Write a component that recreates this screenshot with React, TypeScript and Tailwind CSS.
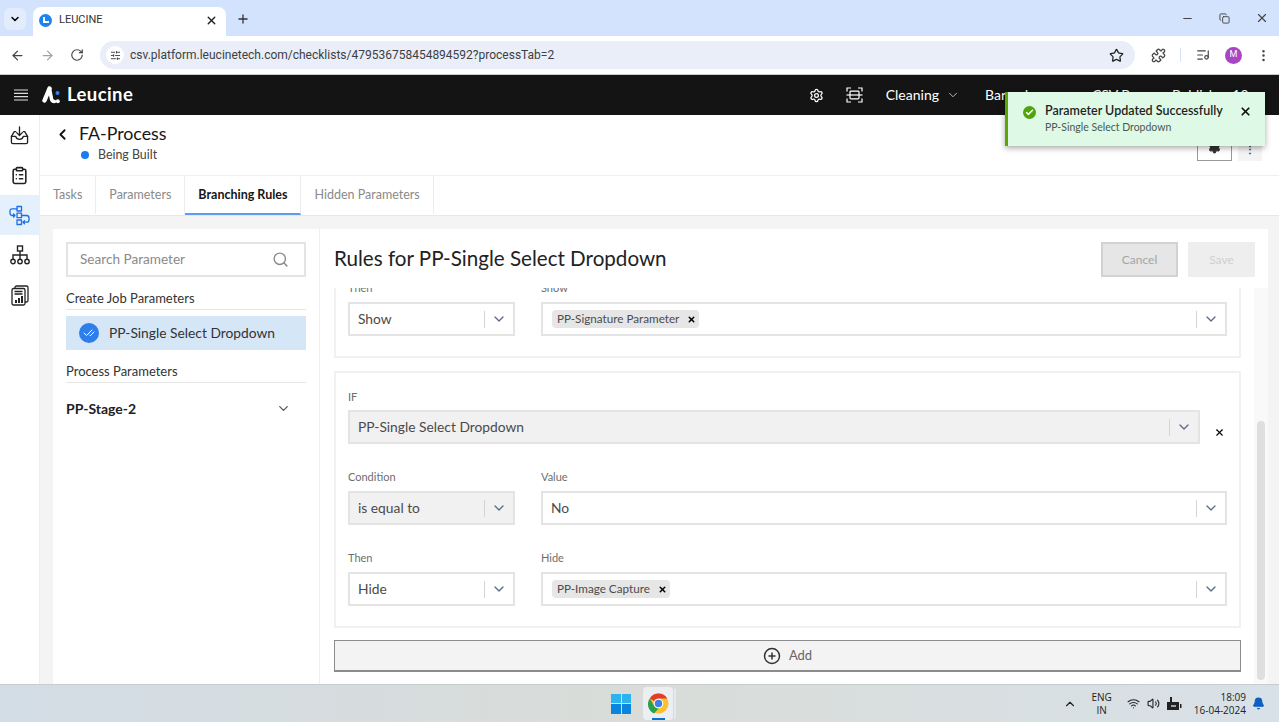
import { ReactNode } from "react";
import { ChevronDown, ChevronLeft, Plus, RotateCw, ArrowLeft, ArrowRight, Star, Settings, X, Search, Check, CheckCheck, Minus, Copy, EllipsisVertical, Puzzle, ListMusic, SlidersHorizontal, ChevronUp, Wifi, Volume2, Bell, ClipboardList, CirclePlus } from "lucide-react";

const SelectBox = ({ value, disabled, width }: { value: string; disabled?: boolean; width: string }) => {
    return (
        <div className={`${width} h-[34px] flex items-center border-2 border-[#e4e4e4] pl-[8px] text-[13.8px] ${disabled ? "bg-[#f1f1f1]" : "bg-white"} text-[#4a4a4a]`}>
            <span className="flex-1">{value}</span>
            <span className="h-[17px] w-px bg-[#d4d4d4]" />
            <ChevronDown size={16} className="mx-[6px] text-[#5d6a8a]" />
        </div>
    )
}

const Chip = ({ label }: { label: string }) => {
    return (
        <span className="h-[18px] flex items-center gap-[8px] bg-[#e6e6e6] rounded-sm pl-[5px] pr-[3px] text-[11.7px] text-[#4c4c4c]">
            <span className="pb-[1px]">{label}</span>
            <X size={9} strokeWidth={4} className="text-black" />
        </span>
    )
}

const MultiBox = ({ chip }: { chip: string }) => {
    return (
        <div className="flex-1 h-[34px] flex items-center border-2 border-[#e4e4e4] pl-[9px] bg-white">
            <div className="flex-1 flex"><Chip label={chip} /></div>
            <span className="h-[17px] w-px bg-[#d4d4d4]" />
            <ChevronDown size={16} className="mx-[6px] text-[#5d6a8a]" />
        </div>
    )
}

const Label = ({ text }: { text: string }) => <p className="text-[11px] leading-[14px] mb-[7px] text-[#6e6e6e]">{text}</p>

const TabItem = ({ label, active }: { label: string; active?: boolean }) => {
    return (
        <div className={`h-full px-[13px] pt-[2px] flex items-center border-r border-[#ececec] border-b-2 text-[12.5px] ${active ? "font-bold text-[#161616] border-b-[#5a9df0]" : "text-[#8a8a8a] border-b-transparent"}`}>
            {label}
        </div>
    )
}

const NavIcon = ({ children, active }: { children: ReactNode; active?: boolean }) => {
    return <div className={`h-10 flex items-center justify-center ${active ? "bg-[#e5f0fd] text-[#1f6fe0]" : "text-[#222]"}`}>{children}</div>
}

const InboxIcon = () => (
    <svg width="19" height="19" viewBox="0 0 20 20" fill="none" stroke="currentColor" strokeWidth="1.4" strokeLinecap="round" strokeLinejoin="round">
        <path d="M6 6 H4.5 L1.5 11 V17 Q1.5 18.5 3 18.5 H17 Q18.5 18.5 18.5 17 V11 L15.5 6 H14" />
        <path d="M1.5 11 H6 Q7 14 10 14 Q13 14 14 11 H18.5" />
        <path d="M10 1 V9.5 M7 7 L10 10 L13 7" />
    </svg>
)

const BranchIcon = () => (
    <svg width="21" height="21" viewBox="0 0 21 21" fill="none" stroke="currentColor" strokeWidth="1.3" strokeLinecap="round" strokeLinejoin="round">
        <rect x="8" y="1.5" width="4.5" height="4.5" />
        <rect x="8" y="8.2" width="4.5" height="4.5" />
        <rect x="8" y="15" width="4.5" height="4.5" />
        <path d="M8 3.8 H3 Q1 3.8 1 6 V8 Q1 10.5 3.5 10.5 H6 M4.5 9 L6 10.5 L4.5 12" />
        <path d="M12.5 10.5 H17.5 Q20 10.5 20 13 V15 Q20 17.2 17.5 17.2 H14 M15.5 15.7 L14 17.2 L15.5 18.7" />
    </svg>
)

const TreeIcon = () => (
    <svg width="20" height="20" viewBox="0 0 20 20" fill="none" stroke="currentColor" strokeWidth="1.4">
        <rect x="7.5" y="1" width="5" height="5" />
        <path d="M10 6 V14 M3 14 V10 H17 V14" />
        <circle cx="3" cy="16.5" r="2.2" />
        <circle cx="10" cy="16.5" r="2.2" />
        <circle cx="17" cy="16.5" r="2.2" />
    </svg>
)

const ReportIcon = () => (
    <svg width="18" height="21" viewBox="0 0 18 21" fill="none" stroke="currentColor" strokeWidth="1.3">
        <rect x="4" y="1" width="13" height="16" rx="1.5" />
        <rect x="1" y="3.5" width="13" height="16.5" rx="1.5" fill="#fff" />
        <path d="M3.5 6.5 H11.5 M3.5 9 H11.5" />
        <path d="M4 18 V15 H6 V18 Z M7 18 V13 H9 V18 Z M10 18 V11 H12 V18 Z" fill="currentColor" stroke="none" />
    </svg>
)

const ScanIcon = () => (
    <svg width="17" height="16" viewBox="0 0 17 16" fill="none" stroke="currentColor" strokeWidth="1.2">
        <path d="M1 4.5 V1 H5 M12 1 H16 V4.5 M1 11.5 V15 H5 M12 15 H16 V11.5" />
        <path d="M0.5 8 H16.5" />
        <path d="M4 8 V5 Q4 4.2 5 4.2 H12 Q13 4.2 13 5 V8 M4 8 V11 Q4 11.8 5 11.8 H12 Q13 11.8 13 11 V8" />
    </svg>
)

const HamburgerIcon = () => (
    <svg width="14" height="12" viewBox="0 0 14 12" stroke="#ddd" strokeWidth="1.2">
        <path d="M0 1 H14 M0 4.3 H14 M0 7.6 H14 M0 11 H14" />
    </svg>
)

const LeucineLogo = () => (
    <svg width="19" height="18" viewBox="0 0 19 18" fill="none">
        <path d="M7.5 2.5 L2.5 14.5" stroke="#fff" strokeWidth="4.4" strokeLinecap="round" />
        <path d="M7.5 2.5 L9.5 13 Q10 15.5 12.5 15.5" stroke="#fff" strokeWidth="3.6" strokeLinecap="round" />
        <circle cx="15.5" cy="7" r="2" fill="#2f7df0" />
        <circle cx="15.8" cy="15.3" r="2" fill="#fff" />
    </svg>
)

const BatteryIcon = () => (
    <svg width="16" height="14" viewBox="0 0 16 14" fill="#222">
        <path d="M1 5 H13 V13 H1 Z M14 7 H15.5 V11 H14 Z" />
        <path d="M4 0 H6 V5 H4 Z" />
        <path d="M5 10 H10 V8 H5 Z" fill="#9aa4a8" />
    </svg>
)

const ChromeLogo = () => (
    <svg width="21" height="21" viewBox="0 0 48 48">
        <circle cx="24" cy="24" r="23" fill="#fbc02d" />
        <path d="M24 1a23 23 0 0 1 20 11.5H24a11.5 11.5 0 0 0-10 5.7L4.1 12.5A23 23 0 0 1 24 1z" fill="#e33b2e" />
        <path d="M4.1 12.5 14 29.8a11.5 11.5 0 0 0 10 5.7L14 47A23 23 0 0 1 4.1 12.5z" fill="#2e9e4f" />
        <circle cx="24" cy="24" r="11" fill="#fff" />
        <circle cx="24" cy="24" r="8.5" fill="#3f7fe8" />
    </svg>
)

const WindowsLogo = () => (
    <div className="grid grid-cols-2 gap-px w-[20px] h-[20px]">
        <span className="bg-[#2bb3f0]" />
        <span className="bg-[#2bb3f0]" />
        <span className="bg-[#0a84dc]" />
        <span className="bg-[#0a84dc]" />
    </div>
)

const App = () => {
    return (
        <div className="w-[1279px] h-[722px] relative overflow-hidden flex flex-col bg-white font-['Lato','Open_Sans',sans-serif]">
            {/* browser tabs */}
            <div className="h-[36px] bg-[#d3e3fd] flex items-end pl-[4px] shrink-0">
                <div className="w-[22px] h-[22px] mb-[6px] rounded-md bg-[#e3ecfb] flex items-center justify-center"><ChevronDown size={12} strokeWidth={3} /></div>
                <div className="w-[193px] h-[29px] ml-[7px] pb-[3px] bg-white rounded-t-lg flex items-center pl-[6px] pr-[8px] font-['Roboto',sans-serif] text-[11px] text-[#333]">
                    <span className="w-[13px] h-[13px] rounded-full bg-[#1a84f0] mr-[7px] flex items-center justify-center"><span className="w-[6px] h-[6px] border-l-2 border-b-2 border-white" /></span>
                    <span className="flex-1">LEUCINE</span>
                    <X size={13} strokeWidth={2.5} className="text-[#222]" />
                </div>
                <Plus size={14} strokeWidth={2.2} className="ml-[10px] mb-[10px] text-[#333]" />
                <div className="flex-1" />
                <div className="flex items-center gap-[25px] pr-[10px] mb-[11px] text-[#444]">
                    <Minus size={13} />
                    <Copy size={11} />
                    <X size={14} />
                </div>
            </div>
            {/* address bar */}
            <div className="h-[39px] bg-white border-b border-[#c9c9c9] flex items-center pl-[10px] pr-[8px] shrink-0 text-[#444] font-['Roboto',sans-serif]">
                <ArrowLeft size={15} />
                <ArrowRight size={15} className="ml-[15px] text-[#a3a3a3]" />
                <RotateCw size={14} className="ml-[15px]" />
                <div className="ml-[16px] w-[1035px] h-[28px] bg-[#e9eef8] rounded-full flex items-center pl-[6px] pr-[11px] text-[12px] text-[#3c4043]">
                    <span className="w-[18px] h-[18px] rounded-full bg-white flex items-center justify-center mr-[6px]"><SlidersHorizontal size={11} /></span>
                    <span className="flex-1">csv.platform.leucinetech.com/checklists/479536758454894592?processTab=2</span>
                    <Star size={15} strokeWidth={2} className="text-[#222]" />
                </div>
                <Puzzle size={15} className="ml-[16px]" />
                <span className="ml-[14px] h-[14px] w-px bg-[#d3e3fd]" />
                <ListMusic size={14} className="ml-[15px]" />
                <span className="ml-[15px] w-[17px] h-[17px] rounded-full bg-[#a944c4] text-white text-[9px] flex items-center justify-center">M</span>
                <EllipsisVertical size={15} className="ml-[14px]" />
            </div>
            {/* app header */}
            <div className="h-[40px] bg-[#141414] text-white flex items-center shrink-0">
                <span className="ml-[14px] flex"><HamburgerIcon /></span>
                <span className="ml-[14px] flex"><LeucineLogo /></span>
                <span className="ml-[6px] text-[18.5px] font-bold tracking-[0.4px]">Leucine</span>
                <div className="flex-1" />
                <Settings size={15} />
                <span className="ml-[22px] flex"><ScanIcon /></span>
                <span className="ml-[23px] pb-[2px] text-[14px]">Cleaning</span>
                <ChevronDown size={14} strokeWidth={1.5} className="ml-[7px] text-[#ccc]" />
                <span className="ml-[25px] pb-[2px] w-[107px] text-[14px]">Barcode</span>
                <span className="w-[80px] pb-[2px] text-[14px]">CSV Process</span>
                <span className="w-[107px] pb-[2px] text-[14px]">Publisher 10</span>
            </div>
            {/* main */}
            <div className="flex-1 flex min-h-0">
                <div className="w-[40px] shrink-0 bg-white border-r border-[#ededed] flex flex-col">
                    <NavIcon><InboxIcon /></NavIcon>
                    <NavIcon><ClipboardList size={19} /></NavIcon>
                    <NavIcon active><BranchIcon /></NavIcon>
                    <NavIcon><TreeIcon /></NavIcon>
                    <NavIcon><ReportIcon /></NavIcon>
                </div>
                <div className="flex-1 flex flex-col min-w-0">
                    {/* process header */}
                    <div className="h-[61px] flex items-start border-b border-[#efefef] shrink-0">
                        <ChevronLeft size={17} strokeWidth={2.6} className="ml-[14px] mt-[11px] text-[#111]" />
                        <div className="ml-[8px] mt-[7px]">
                            <p className="text-[17.8px] leading-[22px] text-[#161616]">FA-Process</p>
                            <p className="flex items-center text-[12.4px] leading-[18px] mt-[2px] text-[#444]"><span className="w-2 h-2 rounded-full bg-[#1a7cf0] ml-[2px] mr-[9px]" />Being Built</p>
                        </div>
                        <div className="flex-1" />
                        <div className="w-[35px] h-[46px] border border-[#999] flex items-end justify-center pb-[6px]"><Settings size={13} className="text-[#333]" fill="#333" /></div>
                        <div className="w-[24px] h-[46px] bg-[#f4f4f4] ml-[6px] mr-[17px] flex items-end justify-center pb-[4px] text-[#333] text-[10px] font-bold">⋮</div>
                    </div>
                    {/* tabs */}
                    <div className="h-[39px] flex shrink-0 bg-white">
                        <TabItem label="Tasks" />
                        <TabItem label="Parameters" />
                        <TabItem label="Branching Rules" active />
                        <TabItem label="Hidden Parameters" />
                    </div>
                    <div className="flex-1 min-h-0 bg-[#f4f4f4] border-t border-[#e8e8e8] pt-[13px] pl-[13px] pr-[11px]">
                        <div className="h-full bg-white flex">
                            {/* left column */}
                            <div className="w-[267px] shrink-0 pl-[13px] pr-[13px] pt-[13px] border-r border-[#efefef] text-[#333]">
                                <div className="h-[35px] border-2 border-[#e4e4e4] flex items-center pl-[12px] pr-[15px] text-[13.6px] text-[#8a8a8a]">
                                    <span className="flex-1">Search Parameter</span>
                                    <Search size={17} />
                                </div>
                                <p className="mt-[11px] h-[20px] text-[13px] leading-[20px] text-[#333]">Create Job Parameters</p>
                                <div className="border-t border-[#e6e6e6] mt-[1px]" />
                                <div className="mt-[6px] h-[34px] bg-[#d5e6f7] flex items-center pl-[13px] text-[13.8px] text-[#333]">
                                    <span className="w-[20px] h-[20px] rounded-full bg-[#2f7de8] flex items-center justify-center mr-[10px]"><CheckCheck size={12} className="text-white" /></span>
                                    PP-Single Select Dropdown
                                </div>
                                <p className="mt-[11px] h-[20px] text-[13px] leading-[20px] text-[#333]">Process Parameters</p>
                                <div className="border-t border-[#e6e6e6] mt-[1px]" />
                                <div className="mt-[15px] flex items-center justify-between pr-[15px] text-[14px] font-bold text-[#222]">
                                    PP-Stage-2
                                    <ChevronDown size={15} className="text-[#555]" />
                                </div>
                            </div>
                            {/* rules */}
                            <div className="flex-1 min-w-0 flex flex-col">
                                <div className="h-[59px] shrink-0 flex items-start pt-[13px] pl-[14px] pr-[13px]">
                                    <p className="flex-1 text-[20.6px] leading-[33px] text-[#222]">Rules for PP-Single Select Dropdown</p>
                                    <button className="w-[77px] h-[35px] bg-[#e6e6e6] border-2 border-[#d2d2d2] text-[12px] text-[#a5a5a5]">Cancel</button>
                                    <button className="w-[67px] h-[35px] ml-[10px] bg-[#eeeeee] text-[12px] text-[#d0d0d0]">Save</button>
                                </div>
                                <div className="flex-1 min-h-0 flex">
                                    <div className="flex-1 min-w-0 overflow-hidden pl-[14px] pr-[13px]">
                                        <div className="-mt-[7px]">
                                            <div className="border-2 border-t-0 border-[#f1f1f1] px-[12px] pb-[20px]">
                                                <div className="flex gap-[26px]">
                                                    <div>
                                                        <Label text="Then" />
                                                        <SelectBox value="Show" width="w-[167px]" />
                                                    </div>
                                                    <div className="flex-1">
                                                        <Label text="Show" />
                                                        <MultiBox chip="PP-Signature Parameter" />
                                                    </div>
                                                </div>
                                            </div>
                                            <div className="mt-[13px] border-2 border-[#f1f1f1] px-[12px] pt-[17px] pb-[20px]">
                                                <p className="text-[11px] leading-[14px] mb-[6px] text-[#6e6e6e]">IF</p>
                                                <div className="flex items-center">
                                                    <SelectBox value="PP-Single Select Dropdown" disabled width="flex-1" />
                                                    <X size={11} strokeWidth={2.4} className="text-black ml-[14px] mr-[2px] mt-[10px]" />
                                                </div>
                                                <div className="mt-[26px] flex gap-[26px]">
                                                    <div>
                                                        <Label text="Condition" />
                                                        <SelectBox value="is equal to" disabled width="w-[167px]" />
                                                    </div>
                                                    <div className="flex-1">
                                                        <Label text="Value" />
                                                        <SelectBox value="No" width="w-full" />
                                                    </div>
                                                </div>
                                                <div className="mt-[26px] flex gap-[26px]">
                                                    <div>
                                                        <Label text="Then" />
                                                        <SelectBox value="Hide" width="w-[167px]" />
                                                    </div>
                                                    <div className="flex-1">
                                                        <Label text="Hide" />
                                                        <MultiBox chip="PP-Image Capture" />
                                                    </div>
                                                </div>
                                            </div>
                                            <div className="mt-[12px] h-[32px] bg-[#f3f3f3] border border-[#8c8c8c] border-b-2 flex items-center justify-center gap-[8px] text-[13px] text-[#666]">
                                                <CirclePlus size={18} className="text-[#333]" />
                                                Add
                                            </div>
                                        </div>
                                    </div>
                                    <div className="w-[14px] shrink-0 bg-[#f9f9f9] flex flex-col justify-end pb-[4px] items-center">
                                        <span className="w-[8px] h-[259px] rounded-full bg-[#dfdfdf]" />
                                    </div>
                                </div>
                            </div>
                        </div>
                    </div>
                </div>
            </div>
            {/* taskbar */}
            <div className="h-[38px] shrink-0 bg-gradient-to-r from-[#d3dde6] via-[#d9dcd8] to-[#d8e1e8] border-t border-[#c8ccce] flex items-center text-[#222] font-['Open_Sans',sans-serif]">
                <div className="ml-[611px] w-[20px]"><WindowsLogo /></div>
                <div className="ml-[12px] w-[30px] h-[33px] bg-[#eceff2] rounded flex items-center justify-center relative">
                    <ChromeLogo />
                    <span className="absolute bottom-0 left-[9px] w-[13px] h-[2px] bg-[#0a6fd0]" />
                </div>
                <span className="ml-px w-[2px] h-[31px] bg-[#e6e9ec] rounded-r" />
                <div className="flex-1" />
                <ChevronUp size={14} />
                <div className="ml-[14px] text-[10px] leading-[13px] text-center">ENG<br />IN</div>
                <Wifi size={13} className="ml-[15px]" />
                <Volume2 size={13} className="ml-[7px]" />
                <span className="ml-[6px] flex"><BatteryIcon /></span>
                <div className="ml-[12px] text-[10px] leading-[13px] text-right">18:09<br />16-04-2024</div>
                <Bell size={13} fill="#0f5fc0" className="ml-[6px] mr-[14px] text-[#0f5fc0]" />
            </div>
            {/* toast */}
            <div className="absolute left-[1005px] top-[92px] w-[260px] h-[54px] bg-[#def9e6] border-l-[3px] border-[#5aa700] shadow-[0_2px_6px_rgba(0,0,0,0.35)] flex items-start pt-[11px]">
                <span className="w-[13px] h-[13px] mt-[3px] ml-[15px] rounded-full bg-[#4ea40a] flex items-center justify-center shrink-0"><Check size={9} strokeWidth={4} className="text-white" /></span>
                <div className="ml-[9px] flex-1">
                    <p className="text-[12.5px] leading-[16px] font-semibold text-[#1f1f1f]">Parameter Updated Successfully</p>
                    <p className="text-[10.5px] leading-[14px] mt-[1px] text-[#4a5a52]">PP-Single Select Dropdown</p>
                </div>
                <X size={13} strokeWidth={3.2} className="mt-[2px] mr-[13px] text-[#111]" />
            </div>
        </div>
    )
}

export default App;
